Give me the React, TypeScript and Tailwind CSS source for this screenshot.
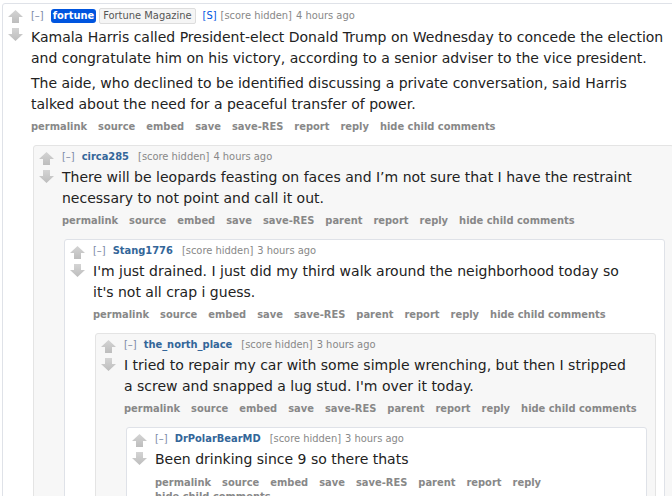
import type { ReactNode } from "react";

const condensed = { fontFamily: '"DejaVu Sans Condensed", "DejaVu Sans", Verdana, sans-serif' };
const bodyFont = { fontFamily: '"DejaVu Sans", Verdana, sans-serif' };

function UpArrow() {
  return (
    <svg width="15" height="13" viewBox="0 0 15 13">
      <defs>
        <linearGradient id="up" x1="0" y1="0" x2="0" y2="1">
          <stop offset="0" stopColor="#d4d4d4" />
          <stop offset="1" stopColor="#bdbdbd" />
        </linearGradient>
      </defs>
      <path d="M7.5 0 L15 7 L11 7 L11 13 L4 13 L4 7 L0 7 Z" fill="url(#up)" />
    </svg>
  );
}

function DownArrow() {
  return (
    <svg width="15" height="13" viewBox="0 0 15 13">
      <defs>
        <linearGradient id="down" x1="0" y1="0" x2="0" y2="1">
          <stop offset="0" stopColor="#d4d4d4" />
          <stop offset="1" stopColor="#bdbdbd" />
        </linearGradient>
      </defs>
      <path d="M4 0 L11 0 L11 6 L15 6 L7.5 13 L0 6 L4 6 Z" fill="url(#down)" />
    </svg>
  );
}

type CommentProps = {
  author: string;
  age: string;
  submitter?: boolean;
  flair?: string;
  body: string[];
  parent?: boolean;
  odd?: boolean;
  top?: boolean;
  hasChildren?: boolean;
  children?: ReactNode;
};

function Comment({ author, age, submitter, flair, body, parent, odd, top, hasChildren, children }: CommentProps) {
  const buttons = ["permalink", "source", "embed", "save", "save-RES"];
  if (parent) buttons.push("parent");
  buttons.push("report", "reply");
  if (hasChildren) buttons.push("hide child comments");

  return (
    <div
      className={`flex rounded-[3px] border ${odd ? "border-[#e4e4e4] bg-[#f7f7f7]" : "border-[#dfe2e8] bg-white"}`}
    >
      <div className="flex w-[28px] shrink-0 flex-col pl-[5px] pt-[6px]">
        <UpArrow />
        <div className="mt-[5px]">
          <DownArrow />
        </div>
      </div>
      <div className="min-w-0 flex-1 pr-[8px] pt-[4px] pb-[10px]">
        <div className="flex items-center text-[11px] leading-[14px] text-[#888]">
          <span className="mr-[7px] text-[#7b8aa6]">[–]</span>
          {submitter ? (
            <span className="mr-[3px] rounded-[3px] bg-[#0055df] px-[2px] font-bold text-white">{author}</span>
          ) : (
            <span className="mr-[9px] font-bold text-[#336699]">{author}</span>
          )}
          {flair && (
            <span className="mr-[7px] rounded-[2px] border border-[#dddddd] bg-[#f5f5f5] px-[3px] leading-[14px] text-[#555]">
              {flair}
            </span>
          )}
          {submitter && <span className="mr-[4px] text-[#0055df]">[S]</span>}
          <span>[score hidden]</span>
          <span className="ml-[4px]">{age}</span>
        </div>
        <div
          className={`mt-[3px] text-[14px] leading-[20.5px] text-[#222] ${top ? "" : "pr-[13px]"}`}
          style={bodyFont}
        >
          {body.map((p, i) => (
            <p key={i} className={i > 0 ? "mt-[5px]" : ""}>
              {p}
            </p>
          ))}
        </div>
        <div className="mt-[6px] flex flex-wrap gap-x-[11px] text-[11px] font-bold leading-[14px] text-[#888]">
          {buttons.map((b) => (
            <span key={b}>{b}</span>
          ))}
        </div>
        {children && <div className="mt-[11px] ml-[2px]">{children}</div>}
      </div>
    </div>
  );
}

export default function App() {
  return (
    <div className="h-[496px] w-[672px] overflow-hidden bg-white" style={condensed}>
      <div className="ml-[2px] mt-[3px] w-[681px]">
        <Comment
          author="fortune"
          submitter
          flair="Fortune Magazine"
          age="4 hours ago"
          top
          hasChildren
          body={[
            "Kamala Harris called President-elect Donald Trump on Wednesday to concede the election and congratulate him on his victory, according to a senior adviser to the vice president.",
            "The aide, who declined to be identified discussing a private conversation, said Harris talked about the need for a peaceful transfer of power.",
          ]}
        >
          <Comment
            author="circa285"
            age="4 hours ago"
            odd
            parent
            hasChildren
            body={[
              "There will be leopards feasting on faces and I’m not sure that I have the restraint necessary to not point and call it out.",
            ]}
          >
            <Comment
              author="Stang1776"
              age="3 hours ago"
              parent
              hasChildren
              body={["I'm just drained. I just did my third walk around the neighborhood today so it's not all crap i guess."]}
            >
              <Comment
                author="the_north_place"
                age="3 hours ago"
                odd
                parent
                hasChildren
                body={[
                  "I tried to repair my car with some simple wrenching, but then I stripped a screw and snapped a lug stud. I'm over it today.",
                ]}
              >
                <Comment
                  author="DrPolarBearMD"
                  age="3 hours ago"
                  parent
                  hasChildren
                  body={["Been drinking since 9 so there thats"]}
                />
              </Comment>
            </Comment>
          </Comment>
        </Comment>
      </div>
    </div>
  );
}
